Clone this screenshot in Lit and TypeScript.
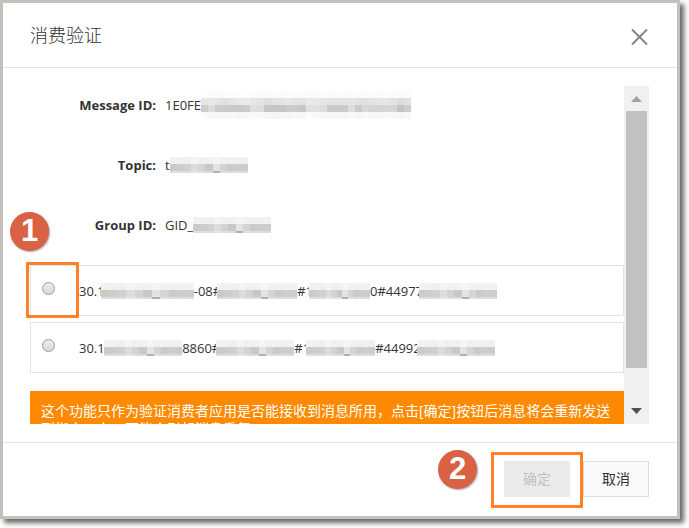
import { LitElement, html, css, svg } from "lit";
import { customElement, property } from "lit/decorators.js";

const CELL = 7;

interface Pattern {
  rows: { height: number; shades: string[] }[];
}

const WORD: Pattern = {
  rows: [
    { height: 7, shades: ["f2", "f1", "ef", "f4", "f0", "f1", "f5", "f1", "f1", "f1", "f1"] },
    { height: 7, shades: ["ca", "cd", "d1", "dc", "d3", "c8", "e3", "d4", "ca", "ce", "cc"] },
    { height: 2, shades: ["de", "df", "dd", "e6", "de", "dd", "b0", "df", "dd", "de", "dd"] },
  ],
};

const LONG: Pattern = {
  rows: [
    { height: 7, shades: ["fd", "fb", "fb", "fc", "fb", "fd", "fe", "fb", "fa", "fb", "fc", "fb", "fc", "fc", "fd", "fb", "fb", "fc", "fb", "fd", "fc", "fb", "fc", "fb", "fc", "fb", "fc", "fb", "fb", "fc"] },
    { height: 7, shades: ["e6", "e8", "e4", "e0", "e5", "e8", "ea", "e6", "e3", "de", "e2", "e4", "e7", "e4", "e3", "e9", "e8", "e5", "e2", "e4", "e3", "e5", "e2", "e0", "e4", "e5", "e6", "e3", "dc", "e2"] },
    { height: 7, shades: ["cc", "dc", "cb", "ca", "c9", "c9", "cb", "df", "dc", "c7", "c6", "c5", "ca", "cb", "c7", "e1", "df", "dc", "ca", "c8", "ca", "dd", "cb", "d7", "d5", "d3", "d6", "d6", "c3", "cd"] },
    { height: 7, shades: ["fa", "f8", "f6", "f7", "f8", "f6", "f8", "fa", "f9", "f6", "f5", "f7", "f6", "f8", "f7", "fb", "f9", "f7", "f6", "f8", "f7", "f9", "f6", "f9", "f8", "f7", "f9", "f8", "f6", "f8"] },
  ],
};

@customElement("redacted-text")
class RedactedText extends LitElement {
  @property({ type: Number }) width = 78;
  @property({ type: Boolean }) long = false;

  static styles = css`
    :host {
      display: block;
      position: relative;
      flex: none;
    }
    .mosaic {
      display: block;
    }
  `;

  render() {
    const { rows } = this.long ? LONG : WORD;
    const total = rows.reduce((sum, row) => sum + row.height, 0);
    const cells = [];
    let y = 0;
    for (const row of rows) {
      row.shades.forEach((shade, i) => {
        cells.push(
          svg`<rect x=${i * CELL} y=${y} width=${CELL} height=${row.height} fill=${"#" + shade.repeat(3)}></rect>`
        );
      });
      y += row.height;
    }
    return html`<svg
      class="mosaic"
      width=${this.width}
      height=${total}
      viewBox="0 0 ${rows[0].shades.length * CELL} ${total}"
      preserveAspectRatio="none"
      shape-rendering="crispEdges"
      aria-hidden="true"
    >${cells}</svg>`;
  }
}

type Part = string | number;

const FIELDS: { label: string; value: string; width: number; long?: boolean }[] = [
  { label: "Message ID:", value: "1E0FE", width: 210, long: true },
  { label: "Topic:", value: "t", width: 78 },
  { label: "Group ID:", value: "GID_", width: 78 },
];

const CLIENTS: Part[][] = [
  ["30.1", 93, "-08#", 80, "#1", 61, "0#44977", 78],
  ["30.1:", 78, "8860#", 78, "#1", 69, "#44992", 78],
];

@customElement("app-root")
class AppRoot extends LitElement {
  static styles = css`
    :host {
      display: block;
      padding: 0 9px 9px 0;
      background: #fff;
      color: #333;
      font-family: "Open Sans", "Noto Sans CJK SC", sans-serif;
      font-size: 13px;
      line-height: 20px;
    }
    * {
      box-sizing: border-box;
    }
    .dialog {
      border: 3px solid #c2c2bb;
      background: #fff;
      box-shadow: 4px 4px 5px rgba(0, 0, 0, 0.6);
    }
    .header {
      display: flex;
      align-items: center;
      justify-content: space-between;
      height: 65px;
      padding: 0 28px 0 27px;
      border-bottom: 1px solid #e3e3e3;
    }
    .title {
      margin: 0;
      font-size: 18px;
      line-height: 24px;
      font-weight: 300;
    }
    .close {
      display: block;
      width: 20px;
      height: 20px;
      padding: 0;
      border: 0;
      background: none;
    }
    .close svg {
      display: block;
    }
    .body {
      display: flex;
      height: 338px;
      margin: 18px 28px 18px 0;
    }
    .content {
      flex: 1;
      min-width: 0;
      padding: 9px 0 0 27px;
      overflow: hidden;
    }
    .fields {
      display: grid;
      grid-template-columns: 126px 1fr;
      grid-auto-rows: 20px;
      column-gap: 9px;
      row-gap: 40px;
      margin: 0 0 30px;
    }
    .label {
      text-align: right;
      font-weight: 700;
    }
    .value,
    .client {
      display: flex;
      align-items: center;
      margin: 0;
      white-space: nowrap;
    }
    .client redacted-text {
      margin-left: -4px;
    }
    .option {
      position: relative;
      display: flex;
      align-items: center;
      height: 51px;
      margin-bottom: 6px;
      padding: 0 12px 0 11px;
      border: 1px solid #e0e3e7;
    }
    .radio {
      appearance: none;
      flex: none;
      width: 13px;
      height: 13px;
      margin: 0 24px 4px 0;
      border: 1px solid #999;
      border-radius: 50%;
      background: linear-gradient(#ececec, #d8d8d8);
    }
    .notice {
      margin: 18px 0 0;
      padding: 11px 11px 12px;
      background: #ff8a00;
      color: #fff;
      font-size: 14px;
      line-height: 18px;
    }
    .scrollbar {
      display: flex;
      flex-direction: column;
      align-items: center;
      flex: none;
      width: 25px;
      background: #f0f0f0;
    }
    .arrow {
      display: block;
      flex: none;
    }
    .thumb {
      width: 21px;
      height: 257px;
      margin-bottom: auto;
      background: #c1c1c1;
    }
    .footer {
      display: flex;
      justify-content: flex-end;
      gap: 13px;
      padding: 18px 28px 19px;
      border-top: 1px solid #e3e3e3;
    }
    .action {
      position: relative;
    }
    .button {
      display: block;
      width: 66px;
      height: 36px;
      padding: 0;
      border: 1px solid #ddd;
      background: #fafafa;
      color: #333;
      font: inherit;
      font-size: 14px;
    }
    .button:disabled {
      border-color: #ebebeb;
      background: #ebebeb;
      color: #c1c1c1;
    }
    .frame {
      position: absolute;
      border: 3px solid #ff8027;
      border-radius: 1px;
      pointer-events: none;
    }
    .badge {
      position: absolute;
      width: 39px;
      height: 39px;
      border-radius: 50%;
      background: #d96245;
      box-shadow: 1px 1px 2px rgba(0, 0, 0, 0.35);
      color: #fff;
      font-family: "Liberation Sans", sans-serif;
      font-size: 31px;
      font-weight: 700;
      line-height: 38px;
      text-align: center;
    }
    .frame-option {
      top: -4px;
      left: -5px;
      width: 53px;
      height: 56px;
    }
    .badge-option {
      top: -54px;
      left: -21px;
    }
    .frame-action {
      top: -9px;
      left: -13px;
      width: 92px;
      height: 56px;
    }
    .badge-action {
      top: -11px;
      left: -66px;
    }
  `;

  private arrow(path: string, fill: string) {
    return html`<svg class="arrow" width="25" height="25" viewBox="0 0 25 25" aria-hidden="true">
      <path d=${path} fill=${fill}></path>
    </svg>`;
  }

  render() {
    return html`
      <section class="dialog" role="dialog" aria-labelledby="title">
        <header class="header">
          <h1 class="title" id="title">消费验证</h1>
          <button class="close" type="button" aria-label="关闭">
            <svg width="20" height="20" viewBox="0 0 20 20" fill="none" stroke="#858585" stroke-width="2">
              <path d="M3 4.5 18 19.5M18 4.5 3 19.5"></path>
            </svg>
          </button>
        </header>
        <div class="body">
          <div class="content">
            <dl class="fields">
              ${FIELDS.map(
                (f) => html`
                  <dt class="label">${f.label}</dt>
                  <dd class="value">
                    <span>${f.value}</span><redacted-text .width=${f.width} .long=${!!f.long}></redacted-text>
                  </dd>
                `
              )}
            </dl>
            ${CLIENTS.map(
              (parts, i) => html`
                <div class="option">
                  <input class="radio" type="radio" name="client" id="client-${i}" />
                  <label class="client" for="client-${i}">
                    ${parts.map((p) =>
                      typeof p === "number"
                        ? html`<redacted-text .width=${p}></redacted-text>`
                        : html`<span>${p}</span>`
                    )}
                  </label>
                  ${i === 0
                    ? html`<span class="frame frame-option"></span><span class="badge badge-option">1</span>`
                    : ""}
                </div>
              `
            )}
            <p class="notice">
              这个功能只作为验证消费者应用是否能接收到消息所用，点击[确定]按钮后消息将会重新发送到指定ID上，可能会引起消息重复
            </p>
          </div>
          <div class="scrollbar" aria-hidden="true">
            ${this.arrow("M7 16 12.5 10 18 16Z", "#a3a3a3")}
            <div class="thumb"></div>
            ${this.arrow("M7 9 12.5 15 18 9Z", "#505050")}
          </div>
        </div>
        <footer class="footer">
          <div class="action">
            <button class="button" type="button" disabled>确定</button>
            <span class="frame frame-action"></span>
            <span class="badge badge-action">2</span>
          </div>
          <button class="button" type="button">取消</button>
        </footer>
      </section>
    `;
  }
}
